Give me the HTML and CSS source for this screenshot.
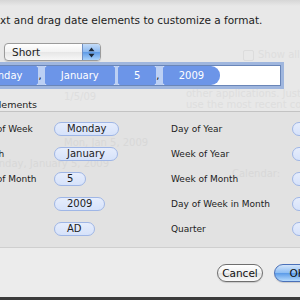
FILE: index.html
```html
<!DOCTYPE html>
<html lang="en">
  <head>
    <meta charset="UTF-8" />
    <title>Date format</title>
    <link rel="stylesheet" href="styles.css">
  </head>
  <body>
    <div class="sheet">
      <!-- the window behind the sheet shows through a little -->
      <div class="behind">
        <span class="ghost ghost-check"></span>
        <span class="ghost ghost-show">Show all</span>
        <span class="ghost ghost-apps">other applications. Just ab</span>
        <span class="ghost ghost-recent">use the most recent co</span>
        <span class="ghost ghost-cal">Calendar:</span>
        <span class="ghost ghost-short">1/5/09</span>
        <span class="ghost ghost-med">Mon, Jan 5, 2009</span>
        <span class="ghost ghost-long">Monday, January 5, 2009</span>
      </div>

      <p class="intro">Select text and drag date elements to customize a format.</p>

      <div class="popup">
        <span class="popup-text">Short</span>
        <span class="popup-arrows">
          <svg width="7" height="11" viewBox="0 0 7 11">
            <path d="M3.5 0.5 L6.5 4.2 H0.5 Z M3.5 10.5 L6.5 6.8 H0.5 Z" fill="#1e2a3a" />
          </svg>
        </span>
      </div>

      <div class="field">
        <span class="chip">Monday</span><span class="gap">, </span><span class="chip">January</span><span class="gap"> </span><span class="chip">5</span><span class="gap">, </span><span class="chip chip-last">2009</span>
      </div>

      <p class="group-title">Date Elements</p>
      <div class="group">
        <span class="label">Day of Week</span>
        <span class="cell"><span class="pill">Monday</span></span>
        <span class="label">Day of Year</span>
        <span class="cell"><span class="pill">5</span></span>

        <span class="label">Month</span>
        <span class="cell"><span class="pill">January</span></span>
        <span class="label">Week of Year</span>
        <span class="cell"><span class="pill">2</span></span>

        <span class="label">Day of Month</span>
        <span class="cell"><span class="pill">5</span></span>
        <span class="label">Week of Month</span>
        <span class="cell"><span class="pill">2</span></span>

        <span class="label">Year</span>
        <span class="cell"><span class="pill">2009</span></span>
        <span class="label">Day of Week in Month</span>
        <span class="cell"><span class="pill">1</span></span>

        <span class="label">Era</span>
        <span class="cell"><span class="pill">AD</span></span>
        <span class="label">Quarter</span>
        <span class="cell"><span class="pill">1</span></span>
      </div>

      <div class="actions">
        <button class="btn">Cancel</button>
        <button class="btn btn-ok">OK</button>
      </div>
    </div>
    <div class="desk"></div>
  </body>
</html>
```

FILE: styles.css
```css
body{
  margin: 0;
  width: 300px;
  height: 300px;
  overflow: hidden;
  background-color: #3b3b3b;
  font-family: "DejaVu Sans", sans-serif;
  font-size: 10px;
  color: #1c1c1c;
}

.sheet{
  position: relative;
  z-index: 0;
  margin-left: -60px;
  width: 380px;
  height: 297px;
  padding-left: 16px;
  box-sizing: border-box;
  background: linear-gradient(#d6d6d6, #e8e8e8 6px, #e8e8e8 248px, #ececec 248px);
}

.behind{
  position: absolute;
  z-index: -1;
  left: 0;
  top: 0;
}
.ghost{
  position: absolute;
  white-space: nowrap;
  color: #dedede;
}
.ghost-check{
  left: 303px;
  top: 50px;
  width: 9px;
  height: 9px;
  border: 1px solid #dcdcdc;
  border-radius: 2px;
}
.ghost-show{ left: 318px; top: 49px; }
.ghost-apps{ left: 246px; top: 88px; }
.ghost-recent{ left: 246px; top: 99px; }
.ghost-cal{ left: 292px; top: 168px; }
.ghost-short{ left: 124px; top: 91px; }
.ghost-med{ left: 124px; top: 137px; }
.ghost-long{ left: 44px; top: 158px; }

.intro{
  margin: 0 0 0 -2px;
  padding-top: 14px;
  line-height: 12px;
  font-size: 10.5px;
  white-space: nowrap;
}

.popup{
  display: flex;
  margin: 17px 0 0 48px;
  width: 97px;
  height: 18px;
  box-sizing: border-box;
  border: 1px solid #9b9b9b;
  border-radius: 4px;
  background: linear-gradient(#ffffff, #f2f2f2 50%, #e6e6e6 51%, #f7f7f7);
  box-shadow: 0 1px 1px rgba(0, 0, 0, 0.12);
  overflow: hidden;
}
.popup-text{
  flex: 1;
  padding-left: 7px;
  line-height: 16px;
  font-size: 10.5px;
}
.popup-arrows{
  display: flex;
  align-items: center;
  justify-content: center;
  width: 17px;
  border-left: 1px solid #6f8fc4;
  background: linear-gradient(#c4dcf8, #8ab8f0 50%, #5d9ae6 51%, #a9d2fb);
}

.field{
  display: flex;
  margin-top: 4px;
  width: 325px;
  height: 21px;
  box-sizing: border-box;
  padding-left: 10px;
  border: 1px solid #6a86b8;
  background-color: white;
  box-shadow: 0 0 0 3px #9fb6de;
}
.chip{
  padding: 0 16px;
  line-height: 19px;
  font-size: 10px;
  color: white;
  background-color: #6c95e8;
  border-radius: 2px;
  white-space: pre;
}
.chip-last{
  border-radius: 2px 9px 9px 2px;
}
.gap{
  line-height: 19px;
  white-space: pre;
  color: #111;
  background-color: #bcd0f4;
}

.group-title{
  margin: 13px 0 0 11px;
  line-height: 12px;
  font-size: 9.5px;
}

.group{
  display: grid;
  grid-template-columns: 78px 117px 121px 60px;
  grid-auto-rows: 25px;
  align-items: center;
  padding: 4px 0 6px 20px;
  border-top: 1px solid #c3c3c3;
  border-bottom: 1px solid #cfcfcf;
  background-color: rgba(0, 0, 0, 0.025);
}
.label{
  font-size: 9px;
  white-space: nowrap;
}
.pill{
  display: inline-block;
  height: 14px;
  box-sizing: border-box;
  padding: 0 12px;
  line-height: 12px;
  font-size: 10px;
  border: 1px solid #9fb6e6;
  border-radius: 7px;
  background: linear-gradient(#e6edfc, #d6e2fa);
}

.actions{
  display: flex;
  gap: 11px;
  margin-top: 16px;
  padding-left: 261px;
}
.btn{
  height: 18px;
  padding: 0;
  width: 57px;
  font-family: "DejaVu Sans", sans-serif;
  font-size: 10.5px;
  color: #111;
  border: 1px solid #6f6f6f;
  border-radius: 9px;
  background: linear-gradient(#ffffff, #f1f1f1 50%, #e2e2e2 51%, #fafafa);
  box-shadow: 0 1px 1px rgba(0, 0, 0, 0.15);
}
.btn-ok{
  border-color: #4a70b8;
  background: linear-gradient(#d3e5fb, #8bbcf3 50%, #5a9ae8 51%, #b6dbfd);
}

.desk{
  height: 3px;
  background-color: #3b3b3b;
}
```
